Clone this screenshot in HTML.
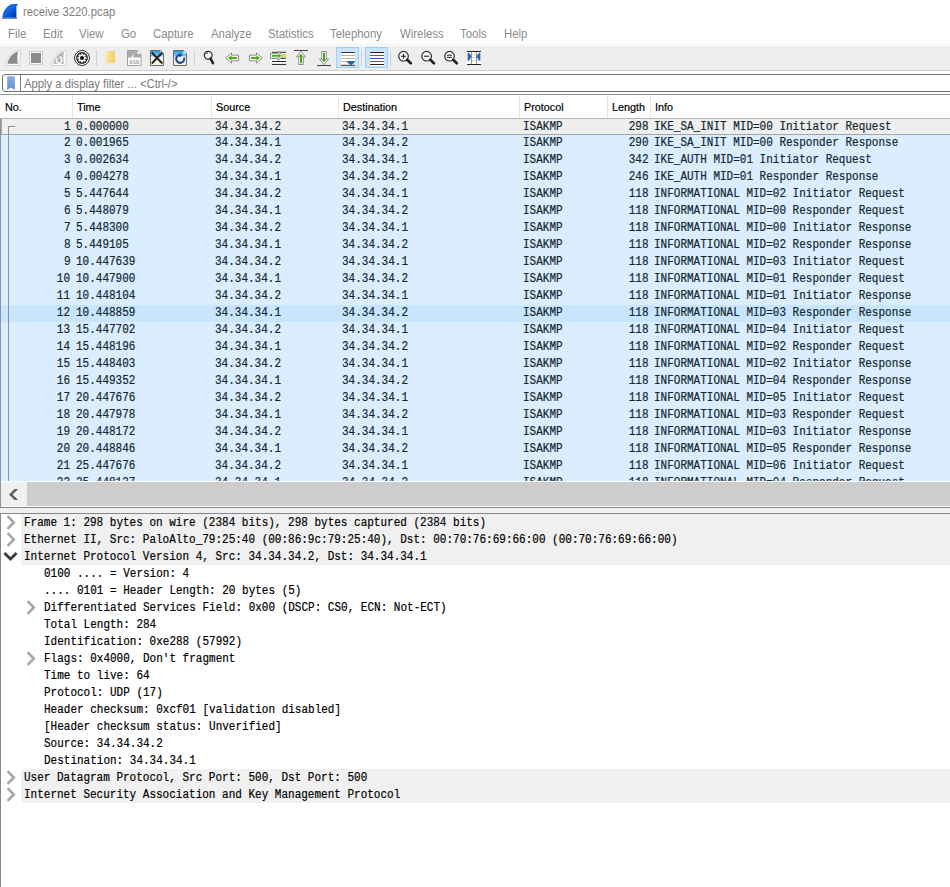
<!DOCTYPE html>
<html><head><meta charset="utf-8">
<style>
html,body{margin:0;padding:0;}
body{width:950px;height:887px;position:relative;overflow:hidden;background:#fff;font-family:"Liberation Sans",sans-serif;}
.abs{position:absolute;}
#title{position:absolute;left:23px;top:4.6px;font-size:12px;color:#808080;white-space:nowrap;transform:scaleX(0.94);transform-origin:0 0;}
.menu{position:absolute;top:27px;font-size:12px;color:#8a8a8a;white-space:nowrap;transform:scaleX(0.95);transform-origin:0 0;}
#tbline{position:absolute;left:0;top:44px;width:950px;height:1px;background:#efefef;}
#toolbar{position:absolute;left:0;top:46px;width:950px;height:24px;background:#eeeeee;}
#tbbot{position:absolute;left:0;top:70px;width:950px;height:1px;background:#cfcfcf;}
.sep{position:absolute;top:50px;width:1px;height:16px;background:#d2d2d2;}
.ico{position:absolute;}
#filter{position:absolute;left:2px;top:74px;width:960px;height:16px;border:1px solid #707070;border-radius:3px;background:#fff;}
#fsep{position:absolute;left:20px;top:75px;width:1px;height:17px;background:#7a7a7a;}
#ftext{position:absolute;left:24px;top:76.5px;font-size:12px;color:#7a7a7a;white-space:nowrap;transform:scaleX(0.94);transform-origin:0 0;}
#plist{position:absolute;left:0;top:94px;width:950px;height:413px;border-top:1px solid #8e949b;border-left:1px solid #8e949b;box-sizing:border-box;background:#fff;overflow:hidden;}
#plborder{position:absolute;left:0;top:507px;width:950px;height:1px;background:#828790;}
#hdr{position:absolute;left:0;top:95px;width:950px;height:23px;background:#fff;}
#hdrline{position:absolute;left:0;top:118px;width:950px;height:1px;background:#b7b7b7;}
.hsep{position:absolute;top:95px;width:1px;height:23px;background:#e5e5e5;}
.htxt{position:absolute;top:100.8px;font-size:11.5px;color:#000;-webkit-text-stroke:0.2px #000;white-space:nowrap;transform:scaleX(0.94);transform-origin:0 0;}
.row{position:absolute;left:1px;width:949px;height:17px;background:#daeeff;color:#12272e;font-family:"Liberation Mono",monospace;font-size:12.5px;}
.row.sel{background:#efefef;}
.row.sel .c{top:2px;}
.row.hov{background:#c8e5fd;}
.c{position:absolute;top:1px;-webkit-text-stroke:0.2px currentColor;white-space:nowrap;transform:scaleX(0.88);transform-origin:0 0;}
.no,.ln{transform-origin:100% 0;}
.no{right:879.5px;}
.tm{left:75px;}
.src{left:214px;}
.dst{left:341px;}
.pr{left:522px;}
.ln{right:301.5px;}
.inf{left:653px;}
#selb{position:absolute;left:1px;top:118px;width:949px;height:17px;box-sizing:border-box;border:1px solid #a5a5a5;border-right:none;}
#treeh{position:absolute;left:8px;top:126px;width:7px;height:1px;background:#87929a;}
#treev{position:absolute;left:8px;top:126px;width:1px;height:355px;background:#87929a;}
#hscroll{position:absolute;left:1px;top:481px;width:949px;height:26px;background:#f0f0f0;border-top:1px solid #fff;border-bottom:1px solid #fff;box-sizing:border-box;}
#htrack{position:absolute;left:27px;top:482px;width:923px;height:24px;background:#cdcdcd;}
#gap{position:absolute;left:0;top:508px;width:950px;height:5px;background:#f0f0f0;}
#dborder{position:absolute;left:0;top:513px;width:950px;height:1px;background:#828790;}
#dleft{position:absolute;left:0;top:513px;width:1px;height:374px;background:#828790;}
.drow{position:absolute;left:1px;width:949px;height:17px;font-family:"Liberation Mono",monospace;font-size:12.5px;color:#000;}
.drow.top::before{content:"";position:absolute;left:20px;top:0;width:929px;height:17px;background:#f0f0f0;}
.dt{position:absolute;top:2px;-webkit-text-stroke:0.2px currentColor;white-space:nowrap;transform:scaleX(0.88);transform-origin:0 0;}
.ex{position:absolute;top:0;}
</style></head><body>
<!-- title bar -->
<svg class="abs" style="left:0px;top:0px" width="22" height="22" viewBox="0 0 22 22">
<defs><linearGradient id="fin" x1="0" y1="0" x2="1" y2="1"><stop offset="0" stop-color="#2a8af5"/><stop offset="0.55" stop-color="#0a5ad8"/><stop offset="1" stop-color="#0022a0"/></linearGradient></defs>
<path d="M2.2 18.4 L2.6 15.5 C3.5 10.5 7 5.8 12 4 H18 L16.4 6.4 V16.8 L17 18.4 Z" fill="url(#fin)"/>
<rect x="2.2" y="17" width="14.6" height="1.6" fill="#4a7ad8" opacity="0.8"/>
</svg>
<div id="title">receive 3220.pcap</div>
<div class="menu" style="left:8px">File</div>
<div class="menu" style="left:43px">Edit</div>
<div class="menu" style="left:79px">View</div>
<div class="menu" style="left:121px">Go</div>
<div class="menu" style="left:153px">Capture</div>
<div class="menu" style="left:211px">Analyze</div>
<div class="menu" style="left:268px">Statistics</div>
<div class="menu" style="left:330px">Telephony</div>
<div class="menu" style="left:400px">Wireless</div>
<div class="menu" style="left:460px">Tools</div>
<div class="menu" style="left:504px">Help</div>
<div id="tbline"></div>
<div id="toolbar"></div>
<div id="tbbot"></div>
<!-- start capture fin (disabled) -->
<svg class="ico" style="left:5px;top:50px" width="16" height="16" viewBox="0 0 16 16">
<path d="M0.5 15.5 C1.5 8.5 6 1.8 12.5 0.5 H15.5 L14.8 15.5 Z" fill="#fbfbfb" stroke="#cdcdcd" stroke-width="0.9"/>
<path d="M2.6 13.8 C3.4 8 7.5 3 13 1.8 C12 5.5 12 10 13 13.8 Z" fill="#8b8b8b"/>
</svg>
<!-- stop -->
<svg class="ico" style="left:29px;top:51px" width="14" height="14" viewBox="0 0 14 14">
<rect x="0.5" y="0.5" width="13" height="13" fill="#fbfbfb" stroke="#cbcbcb"/>
<rect x="2" y="2" width="10" height="10" fill="#8b8b8b"/>
</svg>
<!-- restart -->
<svg class="ico" style="left:51px;top:50px" width="16" height="16" viewBox="0 0 16 16">
<path d="M0.5 15.5 C1.5 8.5 6 1.8 12.5 0.5 H15.5 L14.8 15.5 Z" fill="#fbfbfb" stroke="#cdcdcd" stroke-width="0.9"/>
<path d="M2.6 13.8 C3.4 8 7.5 3 13 1.8 C12 5.5 12 10 13 13.8 Z" fill="#b4b4b4"/>
<path d="M6.6 8.2 A2.7 2.7 0 1 0 10 8.5" fill="none" stroke="#fff" stroke-width="1.5"/>
<path d="M8.5 5.8 L11.3 7.2 L9 9.3 Z" fill="#fff"/>
</svg>
<!-- capture options gear -->
<svg class="ico" style="left:74px;top:50px" width="16" height="16" viewBox="0 0 16 16">
<circle cx="8" cy="8" r="7.5" fill="#fff" stroke="#2e2e2e" stroke-width="1"/>
<circle cx="8" cy="8" r="5.9" fill="#1e1e1e"/>
<g fill="#f4f4f4" transform="translate(8 8)">
<circle r="3.5"/>
<rect x="-0.9" y="-4.6" width="1.8" height="9.2"/>
<rect x="-0.9" y="-4.6" width="1.8" height="9.2" transform="rotate(45)"/>
<rect x="-0.9" y="-4.6" width="1.8" height="9.2" transform="rotate(90)"/>
<rect x="-0.9" y="-4.6" width="1.8" height="9.2" transform="rotate(135)"/>
</g>
<circle cx="8" cy="8" r="2" fill="#111"/>
</svg>
<div class="sep" style="left:96px"></div>
<!-- open folder -->
<svg class="ico" style="left:105px;top:50px" width="11" height="16" viewBox="0 0 11 16">
<defs><linearGradient id="fold" x1="0" y1="0" x2="1" y2="0"><stop offset="0" stop-color="#f8de8c"/><stop offset="1" stop-color="#f3d06a"/></linearGradient></defs>
<path d="M3 1 H10 V8.5 L10.3 9 V13 H3 Z" fill="url(#fold)"/>
<path d="M0.6 1 L3.8 1.6 V15 L0.6 13.8 Z" fill="#fae6a6"/>
<path d="M3.8 1.6 V15" stroke="#f0cc60" stroke-width="0.6"/>
</svg>
<!-- save (disabled) -->
<svg class="ico" style="left:127px;top:50px" width="15" height="16" viewBox="0 0 15 16">
<path d="M0.5 0.5 H10.5 L14 4 V15.5 H0.5 Z" fill="#a9a9a9" stroke="#a0a0a0"/>
<path d="M10.5 0.8 V4 H13.8 Z" fill="#fff"/>
<path d="M4 8 C5 6 5.5 4.5 6 3.5 C6.3 5 6.5 6.5 6.5 8 Z" fill="#f4f4f4"/>
<rect x="1" y="7.5" width="12.5" height="7.5" fill="#fff"/>
<text x="7.3" y="13.6" font-family="Liberation Sans" font-size="5.8" font-weight="bold" fill="#9a9a9a" text-anchor="middle">010</text>
</svg>
<!-- close -->
<svg class="ico" style="left:150px;top:50px" width="15" height="16" viewBox="0 0 15 16">
<defs><linearGradient id="sky" x1="0" y1="0" x2="0" y2="1"><stop offset="0" stop-color="#1a9be6"/><stop offset="0.35" stop-color="#7cc8f2"/><stop offset="0.45" stop-color="#f2f6ee"/><stop offset="1" stop-color="#f8f4dc"/></linearGradient></defs>
<path d="M0.5 0.5 H10.5 L13.5 3.5 V15.5 H0.5 Z" fill="url(#sky)" stroke="#6e6a64"/>
<path d="M10.5 0.8 V3.5 H13.3 Z" fill="#fff"/>
<path d="M1.8 2.5 L12.3 13.5 M12.3 2.5 L1.8 13.5" stroke="#222" stroke-width="1.9"/>
</svg>
<!-- reload -->
<svg class="ico" style="left:173px;top:50px" width="15" height="16" viewBox="0 0 15 16">
<path d="M0.5 0.5 H10.5 L13.5 3.5 V15.5 H0.5 Z" fill="url(#sky)" stroke="#6e6a64"/>
<path d="M10.5 0.8 V3.5 H13.3 Z" fill="#fff"/>
<path d="M7.8 4.9 A4 4 0 1 0 11 7.6" fill="none" stroke="#1a4a9a" stroke-width="2.1"/>
<path d="M6.5 2.8 L9.8 5.2 L6.5 7.3 Z" fill="#1a4a9a"/>
</svg>
<div class="sep" style="left:194px"></div>
<!-- find -->
<svg class="ico" style="left:202px;top:50px" width="14" height="16" viewBox="0 0 14 16">
<circle cx="6.2" cy="5.3" r="3.9" fill="#f6f6f6" stroke="#2a2a2a" stroke-width="1.2"/>
<path d="M4.2 4.3 A2.3 2.3 0 0 1 6 3" fill="none" stroke="#333" stroke-width="0.9"/>
<path d="M8.6 8.6 L11 13.3" stroke="#222" stroke-width="2.5" stroke-linecap="round"/>
</svg>
<!-- back -->
<svg class="ico" style="left:225px;top:52px" width="15" height="12" viewBox="0 0 15 12">
<path d="M0.7 6 L6.5 1 V3.2 H13.5 V8.8 H6.5 V11 Z" fill="#fff" stroke="#8e8e8e" stroke-width="1" stroke-linejoin="round"/>
<path d="M2.6 6 L6.6 3.5 V4.9 H12 V7.1 H6.6 V8.5 Z" fill="#4daf12"/>
</svg>
<!-- forward -->
<svg class="ico" style="left:248px;top:52px" width="15" height="12" viewBox="0 0 15 12">
<path d="M14.3 6 L8.5 1 V3.2 H1.5 V8.8 H8.5 V11 Z" fill="#fff" stroke="#8e8e8e" stroke-width="1" stroke-linejoin="round"/>
<path d="M12.4 6 L8.4 3.5 V4.9 H3 V7.1 H8.4 V8.5 Z" fill="#4daf12"/>
</svg>
<!-- go to packet -->
<svg class="ico" style="left:270px;top:50px" width="17" height="16" viewBox="0 0 17 16">
<rect x="2" y="1.5" width="14" height="13.5" fill="#fff"/>
<rect x="2" y="1.8" width="14" height="1" fill="#222"/>
<rect x="12.8" y="4" width="3.2" height="3.2" fill="#f8dc20"/>
<rect x="2" y="7.8" width="14" height="1" fill="#222"/>
<rect x="2" y="11" width="14" height="1" fill="#222"/>
<rect x="2" y="13.9" width="14" height="1" fill="#222"/>
<path d="M0.6 3.3 H8.3 V1 L13 5.8 L8.3 10.6 V8.3 H0.6 Z" fill="#fff" stroke="#8e8e8e" stroke-width="1" stroke-linejoin="round"/>
<path d="M2 4.8 H8.8 V3.3 L11.3 5.8 L8.8 8.2 V6.8 H2 Z" fill="#4daf12"/>
</svg>
<!-- first packet -->
<svg class="ico" style="left:294px;top:50px" width="14" height="16" viewBox="0 0 14 16">
<rect x="0" y="0" width="14" height="1" fill="#444"/>
<path d="M7 1.4 L11.6 7 H9.3 V14.5 H4.7 V7 H2.4 Z" fill="#fff" stroke="#8e8e8e" stroke-width="1" stroke-linejoin="round"/>
<path d="M7 3.8 L9.6 6.8 H8 V13.2 H6 V6.8 H4.4 Z" fill="#48a814"/>
</svg>
<!-- last packet -->
<svg class="ico" style="left:317px;top:50px" width="14" height="16" viewBox="0 0 14 16">
<rect x="0" y="15" width="14" height="1" fill="#444"/>
<path d="M7 14.6 L11.6 9 H9.3 V1.5 H4.7 V9 H2.4 Z" fill="#fff" stroke="#8e8e8e" stroke-width="1" stroke-linejoin="round"/>
<path d="M7 12.2 L9.6 9.2 H8 V2.8 H6 V9.2 H4.4 Z" fill="#48a814"/>
</svg>
<!-- autoscroll (toggled) -->
<div class="ico" style="left:336px;top:47px;width:21px;height:19px;background:#cce4f7;border:1px solid #99d1ff;"></div>
<svg class="ico" style="left:341px;top:51px" width="14" height="15" viewBox="0 0 14 15">
<rect x="0" y="1" width="14" height="14" fill="#fdfdfa"/>
<rect x="0" y="1" width="14" height="1" fill="#333"/>
<rect x="0" y="4" width="14" height="1" fill="#b4b4a8"/>
<rect x="0" y="7" width="14" height="1" fill="#b4b4a8"/>
<rect x="0" y="10" width="14" height="1" fill="#b4b4a8"/>
<rect x="0" y="13.8" width="14" height="1" fill="#333"/>
<path d="M6 10 H14 C14 12 12 13.2 10.8 13.4 V14.8 H9.2 V13.4 C8 13.2 6 12 6 10 Z" fill="#2d62aa"/>
</svg>
<div class="sep" style="left:361px"></div>
<!-- colorize (toggled) -->
<div class="ico" style="left:365px;top:47px;width:21px;height:19px;background:#cce4f7;border:1px solid #99d1ff;"></div>
<svg class="ico" style="left:370px;top:51px" width="14" height="15" viewBox="0 0 14 15">
<rect x="0" y="1" width="14" height="14" fill="#fff"/>
<rect x="0" y="1" width="14" height="1" fill="#222"/>
<rect x="0" y="4" width="14" height="1" fill="#ee2222"/>
<rect x="0" y="7" width="14" height="1" fill="#2a55a2"/>
<rect x="0" y="10" width="14" height="1" fill="#6a4a8c"/>
<rect x="0" y="13" width="14" height="1" fill="#222"/>
</svg>
<div class="sep" style="left:390px"></div>
<!-- zoom in -->
<svg class="ico" style="left:397px;top:50px" width="16" height="16" viewBox="0 0 16 16">
<circle cx="6.5" cy="6.2" r="4.8" fill="#f8f8f8" stroke="#2a2a2a" stroke-width="1.2"/>
<path d="M4 6.2 H9 M6.5 3.7 V8.7" stroke="#222" stroke-width="1.1"/>
<path d="M10.2 9.8 L13.8 13.3" stroke="#222" stroke-width="2.6" stroke-linecap="round"/>
</svg>
<!-- zoom out -->
<svg class="ico" style="left:420px;top:50px" width="16" height="16" viewBox="0 0 16 16">
<circle cx="6.6" cy="6.2" r="4.8" fill="#f8f8f8" stroke="#2a2a2a" stroke-width="1.2"/>
<path d="M4.1 6.2 H9.1" stroke="#222" stroke-width="1.1"/>
<path d="M10.3 9.8 L13.9 13.3" stroke="#222" stroke-width="2.6" stroke-linecap="round"/>
</svg>
<!-- normal size -->
<svg class="ico" style="left:443px;top:50px" width="16" height="16" viewBox="0 0 16 16">
<circle cx="6.5" cy="6.2" r="4.8" fill="#f8f8f8" stroke="#2a2a2a" stroke-width="1.2"/>
<path d="M4 5.2 H9 M4 7.4 H9" stroke="#222" stroke-width="1"/>
<path d="M10.2 9.8 L13.8 13.3" stroke="#222" stroke-width="2.6" stroke-linecap="round"/>
</svg>
<!-- resize columns -->
<svg class="ico" style="left:467px;top:50px" width="14" height="16" viewBox="0 0 14 16">
<rect x="0" y="1" width="14" height="14" fill="#fff"/>
<rect x="0" y="1" width="14" height="1" fill="#222"/>
<rect x="0" y="14" width="14" height="1" fill="#222"/>
<rect x="0" y="4.3" width="14" height="0.8" fill="#cfcfc4"/>
<rect x="0" y="7.3" width="14" height="0.8" fill="#cfcfc4"/>
<rect x="0" y="10.3" width="14" height="0.8" fill="#cfcfc4"/>
<rect x="4" y="2" width="1" height="12" fill="#9a9a9a"/>
<rect x="9" y="2" width="1" height="12" fill="#9a9a9a"/>
<path d="M0.6 2.8 H2 L4.6 6.6 L2 10.4 H0.6 Z" fill="#2d68b8"/>
<path d="M13.4 2.8 H12 L9.4 6.6 L12 10.4 H13.4 Z" fill="#2d68b8"/>
</svg>

<!-- filter -->
<div id="filter"></div>
<div id="fsep"></div>
<svg class="abs" style="left:7px;top:76px" width="9" height="15" viewBox="0 0 9 15"><defs><linearGradient id="bm" x1="0" y1="0" x2="0" y2="1"><stop offset="0" stop-color="#86ade0"/><stop offset="1" stop-color="#5f93d4"/></linearGradient></defs><path d="M0.2 0.2 H7.9 V14 L4.05 11.6 L0.2 14 Z" fill="url(#bm)"/></svg>
<div id="ftext">Apply a display filter ... &lt;Ctrl-/&gt;</div>
<!-- packet list -->
<div id="plist"></div>
<div id="hdr"></div>
<div class="hsep" style="left:72px"></div>
<div class="hsep" style="left:211px"></div>
<div class="hsep" style="left:338px"></div>
<div class="hsep" style="left:519px"></div>
<div class="hsep" style="left:607px"></div>
<div class="hsep" style="left:650px"></div>
<div class="htxt" style="left:5px">No.</div>
<div class="htxt" style="left:77px">Time</div>
<div class="htxt" style="left:216px">Source</div>
<div class="htxt" style="left:343px">Destination</div>
<div class="htxt" style="left:524px">Protocol</div>
<div class="htxt" style="left:612px">Length</div>
<div class="htxt" style="left:655px">Info</div>
<div class="row sel" style="top:118px"><span class="c no">1</span><span class="c tm">0.000000</span><span class="c src">34.34.34.2</span><span class="c dst">34.34.34.1</span><span class="c pr">ISAKMP</span><span class="c ln">298</span><span class="c inf">IKE_SA_INIT MID=00 Initiator Request</span></div>
<div class="row" style="top:135px"><span class="c no">2</span><span class="c tm">0.001965</span><span class="c src">34.34.34.1</span><span class="c dst">34.34.34.2</span><span class="c pr">ISAKMP</span><span class="c ln">290</span><span class="c inf">IKE_SA_INIT MID=00 Responder Response</span></div>
<div class="row" style="top:152px"><span class="c no">3</span><span class="c tm">0.002634</span><span class="c src">34.34.34.2</span><span class="c dst">34.34.34.1</span><span class="c pr">ISAKMP</span><span class="c ln">342</span><span class="c inf">IKE_AUTH MID=01 Initiator Request</span></div>
<div class="row" style="top:169px"><span class="c no">4</span><span class="c tm">0.004278</span><span class="c src">34.34.34.1</span><span class="c dst">34.34.34.2</span><span class="c pr">ISAKMP</span><span class="c ln">246</span><span class="c inf">IKE_AUTH MID=01 Responder Response</span></div>
<div class="row" style="top:186px"><span class="c no">5</span><span class="c tm">5.447644</span><span class="c src">34.34.34.2</span><span class="c dst">34.34.34.1</span><span class="c pr">ISAKMP</span><span class="c ln">118</span><span class="c inf">INFORMATIONAL MID=02 Initiator Request</span></div>
<div class="row" style="top:203px"><span class="c no">6</span><span class="c tm">5.448079</span><span class="c src">34.34.34.1</span><span class="c dst">34.34.34.2</span><span class="c pr">ISAKMP</span><span class="c ln">118</span><span class="c inf">INFORMATIONAL MID=00 Responder Request</span></div>
<div class="row" style="top:220px"><span class="c no">7</span><span class="c tm">5.448300</span><span class="c src">34.34.34.2</span><span class="c dst">34.34.34.1</span><span class="c pr">ISAKMP</span><span class="c ln">118</span><span class="c inf">INFORMATIONAL MID=00 Initiator Response</span></div>
<div class="row" style="top:237px"><span class="c no">8</span><span class="c tm">5.449105</span><span class="c src">34.34.34.1</span><span class="c dst">34.34.34.2</span><span class="c pr">ISAKMP</span><span class="c ln">118</span><span class="c inf">INFORMATIONAL MID=02 Responder Response</span></div>
<div class="row" style="top:254px"><span class="c no">9</span><span class="c tm">10.447639</span><span class="c src">34.34.34.2</span><span class="c dst">34.34.34.1</span><span class="c pr">ISAKMP</span><span class="c ln">118</span><span class="c inf">INFORMATIONAL MID=03 Initiator Request</span></div>
<div class="row" style="top:271px"><span class="c no">10</span><span class="c tm">10.447900</span><span class="c src">34.34.34.1</span><span class="c dst">34.34.34.2</span><span class="c pr">ISAKMP</span><span class="c ln">118</span><span class="c inf">INFORMATIONAL MID=01 Responder Request</span></div>
<div class="row" style="top:288px"><span class="c no">11</span><span class="c tm">10.448104</span><span class="c src">34.34.34.2</span><span class="c dst">34.34.34.1</span><span class="c pr">ISAKMP</span><span class="c ln">118</span><span class="c inf">INFORMATIONAL MID=01 Initiator Response</span></div>
<div class="row hov" style="top:305px"><span class="c no">12</span><span class="c tm">10.448859</span><span class="c src">34.34.34.1</span><span class="c dst">34.34.34.2</span><span class="c pr">ISAKMP</span><span class="c ln">118</span><span class="c inf">INFORMATIONAL MID=03 Responder Response</span></div>
<div class="row" style="top:322px"><span class="c no">13</span><span class="c tm">15.447702</span><span class="c src">34.34.34.2</span><span class="c dst">34.34.34.1</span><span class="c pr">ISAKMP</span><span class="c ln">118</span><span class="c inf">INFORMATIONAL MID=04 Initiator Request</span></div>
<div class="row" style="top:339px"><span class="c no">14</span><span class="c tm">15.448196</span><span class="c src">34.34.34.1</span><span class="c dst">34.34.34.2</span><span class="c pr">ISAKMP</span><span class="c ln">118</span><span class="c inf">INFORMATIONAL MID=02 Responder Request</span></div>
<div class="row" style="top:356px"><span class="c no">15</span><span class="c tm">15.448403</span><span class="c src">34.34.34.2</span><span class="c dst">34.34.34.1</span><span class="c pr">ISAKMP</span><span class="c ln">118</span><span class="c inf">INFORMATIONAL MID=02 Initiator Response</span></div>
<div class="row" style="top:373px"><span class="c no">16</span><span class="c tm">15.449352</span><span class="c src">34.34.34.1</span><span class="c dst">34.34.34.2</span><span class="c pr">ISAKMP</span><span class="c ln">118</span><span class="c inf">INFORMATIONAL MID=04 Responder Response</span></div>
<div class="row" style="top:390px"><span class="c no">17</span><span class="c tm">20.447676</span><span class="c src">34.34.34.2</span><span class="c dst">34.34.34.1</span><span class="c pr">ISAKMP</span><span class="c ln">118</span><span class="c inf">INFORMATIONAL MID=05 Initiator Request</span></div>
<div class="row" style="top:407px"><span class="c no">18</span><span class="c tm">20.447978</span><span class="c src">34.34.34.1</span><span class="c dst">34.34.34.2</span><span class="c pr">ISAKMP</span><span class="c ln">118</span><span class="c inf">INFORMATIONAL MID=03 Responder Request</span></div>
<div class="row" style="top:424px"><span class="c no">19</span><span class="c tm">20.448172</span><span class="c src">34.34.34.2</span><span class="c dst">34.34.34.1</span><span class="c pr">ISAKMP</span><span class="c ln">118</span><span class="c inf">INFORMATIONAL MID=03 Initiator Response</span></div>
<div class="row" style="top:441px"><span class="c no">20</span><span class="c tm">20.448846</span><span class="c src">34.34.34.1</span><span class="c dst">34.34.34.2</span><span class="c pr">ISAKMP</span><span class="c ln">118</span><span class="c inf">INFORMATIONAL MID=05 Responder Response</span></div>
<div class="row" style="top:458px"><span class="c no">21</span><span class="c tm">25.447676</span><span class="c src">34.34.34.2</span><span class="c dst">34.34.34.1</span><span class="c pr">ISAKMP</span><span class="c ln">118</span><span class="c inf">INFORMATIONAL MID=06 Initiator Request</span></div>
<div class="row" style="top:475px"><span class="c no">22</span><span class="c tm">25.448137</span><span class="c src">34.34.34.1</span><span class="c dst">34.34.34.2</span><span class="c pr">ISAKMP</span><span class="c ln">118</span><span class="c inf">INFORMATIONAL MID=04 Responder Request</span></div>
<div id="selb"></div>
<div id="hdrline"></div>
<div id="treeh"></div>
<div id="treev"></div>
<div id="hscroll"></div>
<div id="htrack"></div>
<svg class="abs" style="left:0px;top:476px" width="24" height="30" viewBox="0 0 24 30"><path d="M14.5 13 H18.1 L12.6 18.5 L18.1 24 H14.5 L9 18.5 Z" fill="#5f5f5f"/></svg>
<div id="plborder"></div>
<div id="gap"></div>
<!-- details -->
<div id="dborder"></div>
<div id="dleft"></div>
<div class="drow top" style="top:514px"><svg class="ex" style="left:0px" width="20" height="17" viewBox="0 0 20 17"><path d="M6.6 2.2 L12.8 8.5 L6.6 14.8" fill="none" stroke="#a8a8a8" stroke-width="2.6"/></svg><span class="dt" style="left:22.6px">Frame 1: 298 bytes on wire (2384 bits), 298 bytes captured (2384 bits)</span></div>
<div class="drow top" style="top:531px"><svg class="ex" style="left:0px" width="20" height="17" viewBox="0 0 20 17"><path d="M6.6 2.2 L12.8 8.5 L6.6 14.8" fill="none" stroke="#a8a8a8" stroke-width="2.6"/></svg><span class="dt" style="left:22.6px">Ethernet II, Src: PaloAlto_79:25:40 (00:86:9c:79:25:40), Dst: 00:70:76:69:66:00 (00:70:76:69:66:00)</span></div>
<div class="drow top" style="top:548px"><svg class="ex" style="left:0px" width="20" height="17" viewBox="0 0 20 17"><path d="M3.4 5 L9.5 11.1 L15.6 5" fill="none" stroke="#3a3a3a" stroke-width="2.8"/></svg><span class="dt" style="left:22.6px">Internet Protocol Version 4, Src: 34.34.34.2, Dst: 34.34.34.1</span></div>
<div class="drow" style="top:565px"><span class="dt" style="left:42.6px">0100 .... = Version: 4</span></div>
<div class="drow" style="top:582px"><span class="dt" style="left:42.6px">.... 0101 = Header Length: 20 bytes (5)</span></div>
<div class="drow" style="top:599px"><svg class="ex" style="left:20px" width="20" height="17" viewBox="0 0 20 17"><path d="M6.6 2.2 L12.8 8.5 L6.6 14.8" fill="none" stroke="#a8a8a8" stroke-width="2.6"/></svg><span class="dt" style="left:42.6px">Differentiated Services Field: 0x00 (DSCP: CS0, ECN: Not-ECT)</span></div>
<div class="drow" style="top:616px"><span class="dt" style="left:42.6px">Total Length: 284</span></div>
<div class="drow" style="top:633px"><span class="dt" style="left:42.6px">Identification: 0xe288 (57992)</span></div>
<div class="drow" style="top:650px"><svg class="ex" style="left:20px" width="20" height="17" viewBox="0 0 20 17"><path d="M6.6 2.2 L12.8 8.5 L6.6 14.8" fill="none" stroke="#a8a8a8" stroke-width="2.6"/></svg><span class="dt" style="left:42.6px">Flags: 0x4000, Don&#x27;t fragment</span></div>
<div class="drow" style="top:667px"><span class="dt" style="left:42.6px">Time to live: 64</span></div>
<div class="drow" style="top:684px"><span class="dt" style="left:42.6px">Protocol: UDP (17)</span></div>
<div class="drow" style="top:701px"><span class="dt" style="left:42.6px">Header checksum: 0xcf01 [validation disabled]</span></div>
<div class="drow" style="top:718px"><span class="dt" style="left:42.6px">[Header checksum status: Unverified]</span></div>
<div class="drow" style="top:735px"><span class="dt" style="left:42.6px">Source: 34.34.34.2</span></div>
<div class="drow" style="top:752px"><span class="dt" style="left:42.6px">Destination: 34.34.34.1</span></div>
<div class="drow top" style="top:769px"><svg class="ex" style="left:0px" width="20" height="17" viewBox="0 0 20 17"><path d="M6.6 2.2 L12.8 8.5 L6.6 14.8" fill="none" stroke="#a8a8a8" stroke-width="2.6"/></svg><span class="dt" style="left:22.6px">User Datagram Protocol, Src Port: 500, Dst Port: 500</span></div>
<div class="drow top" style="top:786px"><svg class="ex" style="left:0px" width="20" height="17" viewBox="0 0 20 17"><path d="M6.6 2.2 L12.8 8.5 L6.6 14.8" fill="none" stroke="#a8a8a8" stroke-width="2.6"/></svg><span class="dt" style="left:22.6px">Internet Security Association and Key Management Protocol</span></div>
</body></html>
